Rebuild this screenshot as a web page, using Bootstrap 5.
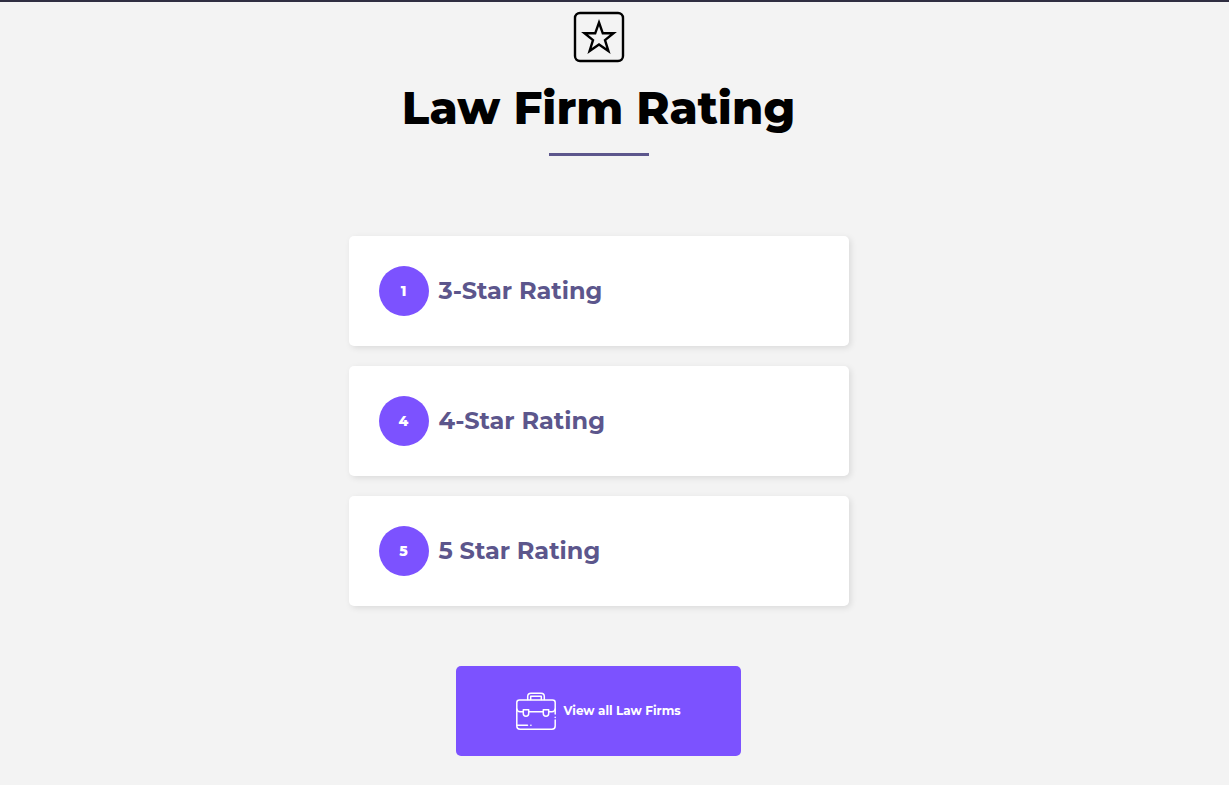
<!DOCTYPE html>
<html lang="en">
<head>
<meta charset="utf-8">
<meta name="viewport" content="width=device-width, initial-scale=1">
<title>Law Firm Rating</title>
<link href="https://cdn.jsdelivr.net/npm/bootstrap@5.3.0/dist/css/bootstrap.min.css" rel="stylesheet">
<style>
  body { background: #f3f3f3; font-family: Montserrat, Inter, "Open Sans", sans-serif; }
  .page-section { border-top: 2px solid #2f2e41; padding: 8px 32px 28px 0; }
  .section-title { font-size: 45px; line-height: 55px; font-weight: 800; color: #000; margin: 16px 0 18px; }
  .title-rule { width: 100px; height: 3px; background: #5c568c; margin-bottom: 80px; }
  .rating-list { max-width: 500px; gap: 20px; margin-bottom: 60px; }
  .rating-card { border: 0; border-radius: 5px; padding: 30px; gap: 10px; box-shadow: 2px 2px 6px rgba(0, 0, 0, .1); }
  .rating-number { width: 50px; height: 50px; background: #7c52ff; font-size: 14px; font-weight: 800; }
  .rating-name { font-size: 24px; line-height: 32px; font-weight: 700; color: #5c568c; }
  .btn-firms { --bs-btn-color: #fff; --bs-btn-bg: #7c52ff; --bs-btn-hover-color: #fff; --bs-btn-hover-bg: #6a40ee; --bs-btn-border-width: 0; --bs-btn-border-radius: 5px; padding: 25px 60px; gap: 7px; font-size: 12px; line-height: 20px; font-weight: 700; }
</style>
</head>
<body>
<main class="page-section d-flex flex-column align-items-center">
  <svg width="54" height="54" viewBox="0 0 54 54" fill="none" stroke="#000" aria-hidden="true">
    <rect x="3" y="3" width="48" height="48" rx="5" stroke-width="2.4"/>
    <path d="M27 12.500 30.800 23.300H41.500L33 30.100 36.400 41 27 34.500 17.600 41 21 30.100 12.500 23.300H23.200Z" stroke-width="2.4"/>
  </svg>
  <h1 class="section-title text-center">Law Firm Rating</h1>
  <div class="title-rule"></div>
  <div class="rating-list d-flex flex-column w-100">
    <div class="card rating-card flex-row align-items-center">
      <span class="rating-number rounded-circle text-white d-flex align-items-center justify-content-center flex-shrink-0">1</span>
      <h2 class="rating-name mb-0">3-Star Rating</h2>
    </div>
    <div class="card rating-card flex-row align-items-center">
      <span class="rating-number rounded-circle text-white d-flex align-items-center justify-content-center flex-shrink-0">4</span>
      <h2 class="rating-name mb-0">4-Star Rating</h2>
    </div>
    <div class="card rating-card flex-row align-items-center">
      <span class="rating-number rounded-circle text-white d-flex align-items-center justify-content-center flex-shrink-0">5</span>
      <h2 class="rating-name mb-0">5 Star Rating</h2>
    </div>
  </div>
  <a class="btn btn-firms d-inline-flex align-items-center" href="#firms">
    <svg width="40" height="40" viewBox="0 0 40 40" fill="none" stroke="#fff" stroke-width="1.5" stroke-linecap="round" stroke-linejoin="round" aria-hidden="true">
      <path d="M11.700 8.500V5.500Q11.700 2.200 15 2.200H25Q28.300 2.200 28.300 5.500V8.500M14.700 8.500V5.300H25.300V8.500"/>
      <path d="M39.200 23V11.500Q39.200 9 36.500 9H3.500Q.8 9 .8 11.500V35Q.8 38.200 4 38.200H36Q39.200 38.200 39.200 35V29M39.200 26.300V26.400"/>
      <path d="M.8 18Q1.200 20.700 4 20.700H7M13 20.700H27M33 20.700H36Q38.800 20.700 39.200 18"/>
      <path d="M7.300 18.700H12.700V22.500Q12.700 25.200 10 25.200T7.300 22.500ZM27.300 18.700H32.700V22.500Q32.700 25.200 30 25.200T27.300 22.500Z"/>
      <path d="M1.500 34.300H11.500M14.800 34.300H15"/>
    </svg>
    View all Law Firms
  </a>
</main>
<script src="https://cdn.jsdelivr.net/npm/bootstrap@5.3.0/dist/js/bootstrap.bundle.min.js"></script>
</body>
</html>
